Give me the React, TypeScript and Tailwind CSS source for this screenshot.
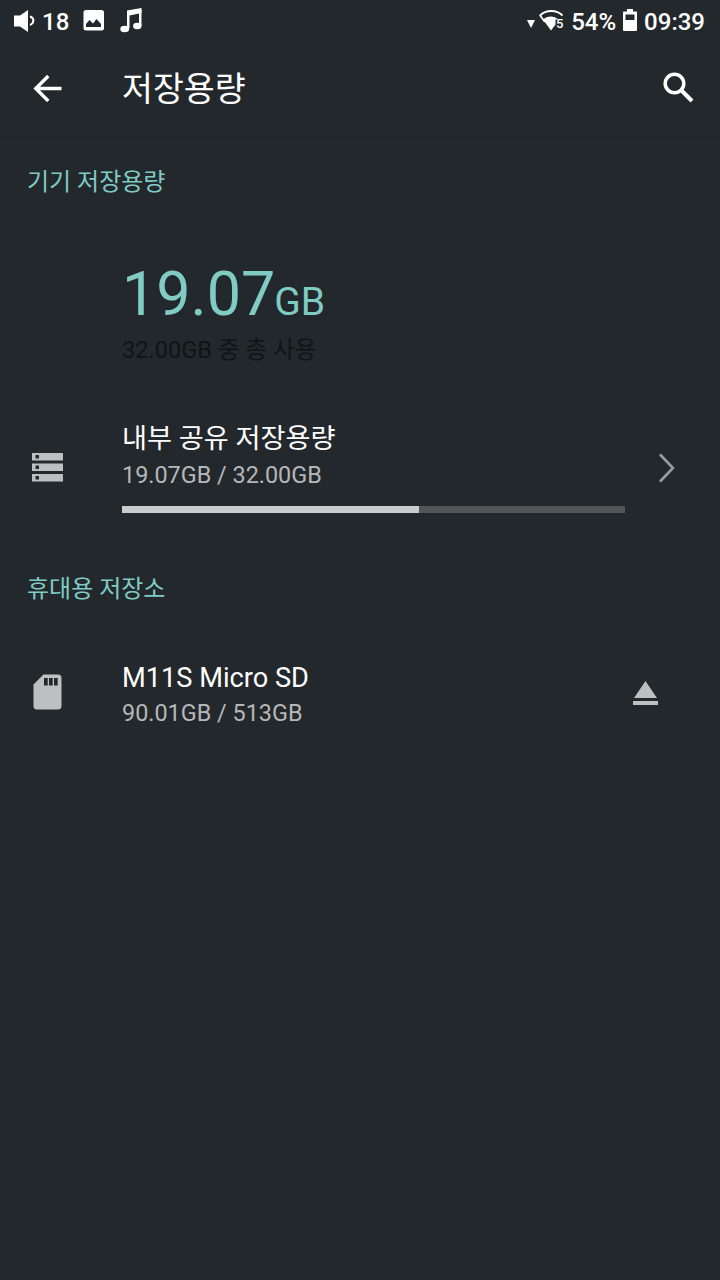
import React from 'react';

const volumes = {
  internal: { name: '내부 공유 저장용량', usage: '19.07GB / 32.00GB', percent: 59 },
  sdcard: { name: 'M11S Micro SD', usage: '90.01GB / 513GB' },
};

const StatusBar = () => (
  <div className="h-[41px] flex items-center justify-between pl-[13px] pr-[15px] text-2xl font-medium leading-none">
    <div className="flex items-center">
      <svg width="22" height="24" viewBox="0 0 22 24" fill="white">
        <path d="M1 6.500h6L15 1v22l-8-5.500H1z" />
        <path d="M17 7.500c4.500 1.500 4.500 6.500 0 8.500" fill="none" stroke="white" strokeWidth="2" />
      </svg>
      <span className="ml-[7px] mt-[3px]">18</span>
      <svg className="ml-[14px]" width="22" height="22" viewBox="0 0 22 22">
        <rect x="0.500" y="0" width="20.5" height="20.5" rx="2.5" fill="white" />
        <path d="M3 17V14l3.500-4 3.500 3.500 3.500-4.500 4.500 5v3z" fill="#23282c" />
      </svg>
      <svg className="-mt-px ml-[15px]" width="24" height="26" viewBox="0 0 24 26" fill="white">
        <path d="M7 3.500 21.500 1v5L9.500 8.500V21H7z" />
        <path d="M19 3h2.500v16H19z" />
        <ellipse cx="4.700" cy="22" rx="4.400" ry="3.200" />
        <ellipse cx="17.300" cy="19" rx="4.200" ry="3.200" />
      </svg>
    </div>
    <div className="flex items-center">
      <svg className="mt-[6px]" width="8" height="8" viewBox="0 0 8 8" fill="white">
        <path d="M0 0h8L4 8z" />
      </svg>
      <svg className="ml-1" width="27" height="24" viewBox="0 0 27 24">
        <path d="M1 6.500C7 .5 17.500.5 23.500 6.500" fill="none" stroke="white" strokeWidth="2" />
        <path d="m.8 6 5 7" stroke="white" strokeWidth="1.600" />
        <path d="M4 10.500c4.500-4 11-4 15.500 0h-3v5L12 21.500z" fill="white" />
        <text x="17" y="18.500" fontSize="13" fontWeight="500" fill="white">5</text>
      </svg>
      <span className="ml-[5px] mt-[3px]">54%</span>
      <svg className="-mt-px ml-[7px]" width="14" height="23" viewBox="0 0 14 23">
        <path d="M4 0h6v2.500h3q1 0 1 1V21q0 1-1 1H1q-1 0-1-1V3.500q0-1 1-1h3z" fill="white" />
        <path d="M2.500 5.500h9v5.500h-9z" fill="#23282c" />
      </svg>
      <span className="ml-[7px] mt-[3px]">09:39</span>
    </div>
  </div>
);

const Toolbar = () => (
  <header className="h-[95px] flex items-center border-b border-[#1f2428] shadow-[0_1px_3px_rgba(0,0,0,0.15)]">
    <button className="ml-[33px]" aria-label="뒤로">
      <svg width="30" height="28" viewBox="0 0 30 28" fill="none" stroke="white" strokeWidth="3.400">
        <path d="M28.500 14.500H3.500M15.300 2 2.800 14.500 15.300 27" />
      </svg>
    </button>
    <h1 className="ml-[59px] mt-[4px] text-[33.6px] leading-none">저장용량</h1>
    <button className="-mt-[2px] ml-auto mr-[26px]" aria-label="검색">
      <svg width="32" height="32" viewBox="0 0 32 32" fill="none" stroke="white">
        <circle cx="12.500" cy="12.500" r="9.300" strokeWidth="3.500" />
        <path d="m19 19 11 11" strokeWidth="4" />
      </svg>
    </button>
  </header>
);

const App = () => {
  return (
    <div className="h-[1280px] w-[720px] overflow-hidden bg-[#23282c] text-white font-[Roboto,'Noto_Sans_CJK_KR',sans-serif]">
      <StatusBar />
      <Toolbar />

      <main>
        <h2 className="h-[88px] pl-[27px] text-2xl leading-[92px] text-[#80cbc4]">기기 저장용량</h2>

        {/* Total usage */}
        <section className="h-[176px] pl-[122px] pt-[34px]">
          <p className="h-[72px] text-[61px] leading-[72px] text-[#80cbc4]">
            19.07<span className="-ml-px text-[39px]">GB</span>
          </p>
          <p className="mt-[6px] text-[23.6px] leading-[28px] text-[#0f1417]">32.00GB 중 총 사용</p>
        </section>

        {/* Internal storage */}
        <section className="h-[136px] flex items-center">
          <svg className="-mt-[2px] ml-[32px] shrink-0" width="31" height="30" viewBox="0 0 31 30">
            <path d="M0 1h31v7.500H0zM0 11.500h31v7.500H0zM0 22h31v7.500H0z" fill="#bdbfc0" />
            <path d="M3.500 3h3.500v3.500h-3.500zM3.500 13.500h3.500v3.500h-3.500zM3.500 24h3.500v3.500h-3.500z" fill="#23282c" />
          </svg>
          <div className="-mt-[3px] ml-[59px] w-[503px]">
            <h3 className="text-[27.2px] leading-[39px]">{volumes.internal.name}</h3>
            <p className="-mt-px text-[23.4px] leading-[34px] text-[#b5b7b9]">{volumes.internal.usage}</p>
            <div className="mt-[14px] h-[7px] bg-[#515558]">
              <div className="h-full bg-[#cacccd]" style={{ width: `${volumes.internal.percent}%` }} />
            </div>
          </div>
          <svg className="ml-[33px]" width="18" height="30" viewBox="0 0 18 30" fill="none" stroke="#999c9e" strokeWidth="2.600">
            <path d="m2 1.500 13 13.500L2 28.500" />
          </svg>
        </section>

        <h2 className="h-[104px] pl-[27px] text-2xl leading-[107px] text-[#80cbc4]">휴대용 저장소</h2>

        {/* Portable storage */}
        <section className="h-[108px] flex items-center">
          <svg className="-mt-[4px] ml-[33px]" width="29" height="36" viewBox="0 0 29 36">
            <path d="M10.500.5H25q3.500 0 3.500 3.500v28q0 3.500-3.500 3.500H4Q.5 35.500.5 32V10.500z" fill="#bdbfc0" />
            <path d="M11 4h3.700v7.500H11zM16 4h3.700v7.500H16zM21 4h3.700v7.500H21z" fill="#23282c" />
          </svg>
          <div className="mt-[2px] ml-[60px]">
            <h3 className="text-[27.2px] leading-[36px]">{volumes.sdcard.name}</h3>
            <p className="text-[23.4px] leading-[34px] text-[#b5b7b9]">{volumes.sdcard.usage}</p>
          </div>
          <button className="-mt-[2px] ml-auto mr-[62px]" aria-label="꺼내기">
            <svg width="25" height="26" viewBox="0 0 25 26" fill="#bdbfc0">
              <path d="m12.500 1 11.500 17H1zM0 21h25v4H0z" />
            </svg>
          </button>
        </section>
      </main>
    </div>
  );
};

export default App;
